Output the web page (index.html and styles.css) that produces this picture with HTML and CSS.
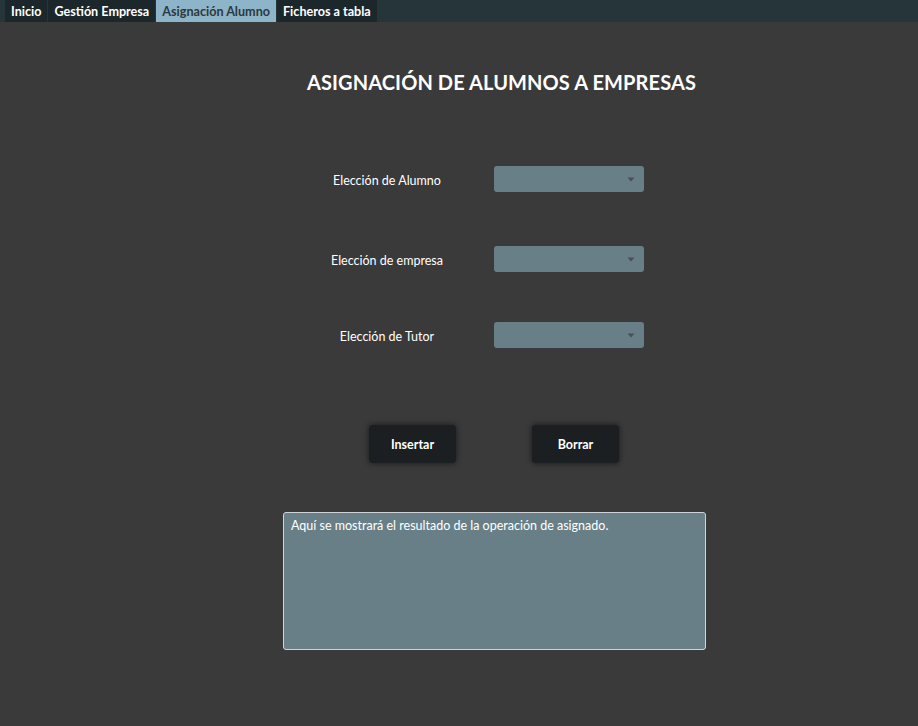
FILE: index.html
```html
<!DOCTYPE html>
<html lang="es">
<head>
<meta charset="utf-8">
<link rel="stylesheet" href="styles.css">
</head>
<body>
<div class="tabbar">
  <div class="tab">Inicio</div>
  <div class="tab">Gestión Empresa</div>
  <div class="tab active">Asignación Alumno</div>
  <div class="tab">Ficheros a tabla</div>
</div>
<main class="content">
  <h1 class="title">ASIGNACIÓN DE ALUMNOS A EMPRESAS</h1>
  <div class="form">
    <div class="row row1">
      <span class="label">Elección de Alumno</span>
      <div class="combo"><svg class="arrow" width="8" height="5" viewBox="0 0 8 5"><path d="M0.5 0.5 L7.5 0.5 L4 4.5 Z" fill="#4a4f52"/></svg></div>
    </div>
    <div class="row row2">
      <span class="label">Elección de empresa</span>
      <div class="combo"><svg class="arrow" width="8" height="5" viewBox="0 0 8 5"><path d="M0.5 0.5 L7.5 0.5 L4 4.5 Z" fill="#4a4f52"/></svg></div>
    </div>
    <div class="row row3">
      <span class="label">Elección de Tutor</span>
      <div class="combo"><svg class="arrow" width="8" height="5" viewBox="0 0 8 5"><path d="M0.5 0.5 L7.5 0.5 L4 4.5 Z" fill="#4a4f52"/></svg></div>
    </div>
  </div>
  <div class="buttons">
    <button class="btn">Insertar</button>
    <button class="btn">Borrar</button>
  </div>
  <div class="output">Aquí se mostrará el resultado de la operación de asignado.</div>
</main>
</body>
</html>
```
FILE: styles.css
```css
* { box-sizing: border-box; }
html, body { margin: 0; padding: 0; }
body {
  width: 918px;
  height: 726px;
  background: #3a3a3a;
  font-family: "Segoe UI", Lato, "Open Sans", sans-serif;
  color: #ffffff;
  overflow: hidden;
}
.tabbar {
  height: 22px;
  background: #253539;
  display: flex;
  padding-left: 5px;
  gap: 1px;
}
.tab {
  height: 22px;
  padding: 0 6px;
  background: #1c272b;
  color: #ffffff;
  font-weight: bold;
  font-size: 12.6px;
  line-height: 23px;
}
.tab.active {
  background: #8db4c8;
  color: #2b3940;
}
.content {
  display: flex;
  flex-direction: column;
  align-items: flex-start;
}
.title {
  margin: 46px 0 0 307px;
  font-size: 20px;
  font-weight: bold;
  line-height: 28px;
  letter-spacing: 0.1px;
}
.form {
  margin-top: 70px;
  display: flex;
  flex-direction: column;
}
.row {
  display: grid;
  grid-template-columns: 150px 150px;
  column-gap: 32px;
  margin-left: 312px;
  align-items: center;
  height: 26px;
}
.row2 { margin-top: 54px; }
.row3 { margin-top: 50px; }
.label {
  text-align: center;
  font-size: 12.5px;
  padding-top: 3px;
}
.combo {
  height: 26px;
  width: 150px;
  background: #687f88;
  border-radius: 3px;
  position: relative;
}
.arrow {
  position: absolute;
  right: 9px;
  top: 11px;
}
.buttons {
  margin: 77px 0 0 369px;
  display: flex;
  gap: 76px;
}
.btn {
  width: 87px;
  height: 38px;
  background: #1b1f21;
  border: none;
  border-radius: 4px;
  color: #ffffff;
  font-family: inherit;
  font-weight: bold;
  font-size: 12.5px;
  box-shadow: 0 0 5px 1px rgba(0,0,0,0.45);
  padding: 0;
}
.output {
  margin: 49px 0 0 283px;
  width: 423px;
  height: 138px;
  background: #687f88;
  border: 1px solid #d0d4d6;
  border-radius: 3px;
  padding: 5px 7px;
  font-size: 12.5px;
  line-height: 16px;
}
```
